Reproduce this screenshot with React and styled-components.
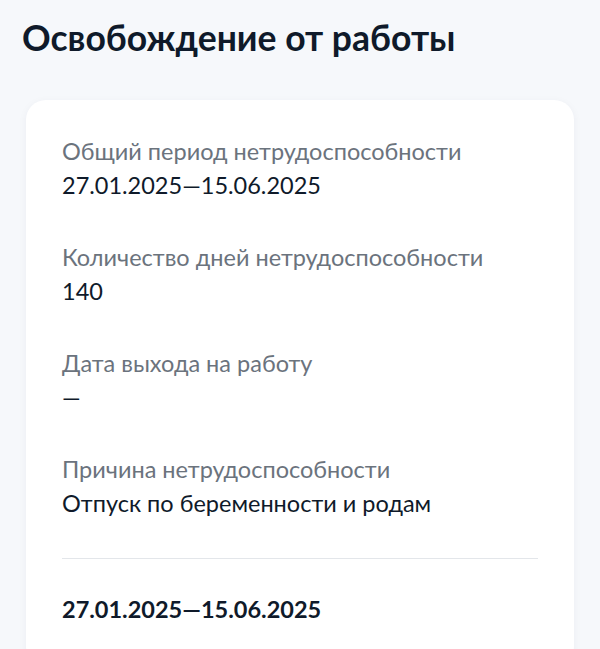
import React from 'react'
import styled, { createGlobalStyle } from 'styled-components'

const GlobalStyle = createGlobalStyle`
  html, body {
    margin: 0;
    padding: 0;
    background: #f6f8fb;
    font-family: Lato, "Noto Sans", sans-serif;
  }
`

const Page = styled.div`
  padding: 16px 26px 0 26px;
  height: 649px;
  box-sizing: border-box;
  overflow: hidden;
`

const Title = styled.h1`
  margin: 0 0 0 -4px;
  font-size: 35.5px;
  line-height: 44px;
  font-weight: 700;
  color: #0f1a2a;
`

const Card = styled.div`
  margin-top: 40px;
  background: #fff;
  border-radius: 20px;
  box-shadow: 0 2px 8px rgba(20, 40, 80, 0.05);
  padding: 34px 36px 40px 36px;
`

const Field = styled.div`
  display: flex;
  flex-direction: column;
  margin-bottom: 38px;
`

const Label = styled.div`
  font-size: 23.5px;
  line-height: 34px;
  color: #6b737d;
`

const Value = styled.div`
  font-size: 23.5px;
  line-height: 34px;
  color: #0f1a2a;
`

const Divider = styled.hr`
  border: none;
  border-top: 1px solid #e3e6ea;
  margin: 2px 0 0 0;
`

const Period = styled.div`
  margin-top: 33px;
  font-size: 23.5px;
  line-height: 34px;
  font-weight: 700;
  color: #0f1a2a;
`

const fields = [
  { label: 'Общий период нетрудоспособности', value: '27.01.2025—15.06.2025' },
  { label: 'Количество дней нетрудоспособности', value: '140' },
  { label: 'Дата выхода на работу', value: '—' },
  { label: 'Причина нетрудоспособности', value: 'Отпуск по беременности и родам' },
]

export default function App() {
  return (
    <>
      <GlobalStyle />
      <Page>
        <Title>Освобождение от работы</Title>
        <Card>
          {fields.map((f) => (
            <Field key={f.label}>
              <Label>{f.label}</Label>
              <Value>{f.value}</Value>
            </Field>
          ))}
          <Divider />
          <Period>27.01.2025—15.06.2025</Period>
        </Card>
      </Page>
    </>
  )
}
